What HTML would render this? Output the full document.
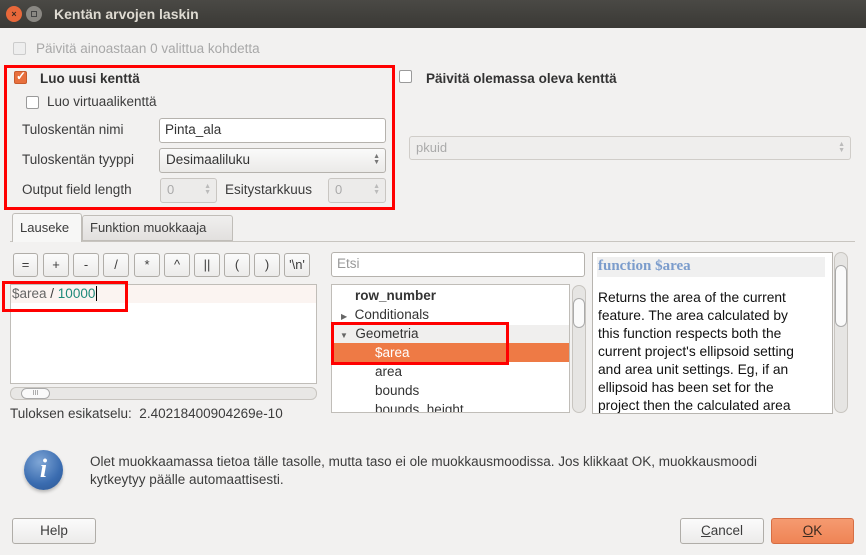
<!DOCTYPE html>
<html><head><meta charset="utf-8"><style>
*{box-sizing:border-box;margin:0;padding:0}
body{width:866px;height:555px;overflow:hidden;background:#f2f1f0;font-family:"Liberation Sans",sans-serif;font-size:13px;color:#3c3c3c;position:relative}
.a{position:absolute;white-space:nowrap}
.t{line-height:16px}
.cb{width:13px;height:13px;border:1px solid #9a9a9a;border-radius:2px;background:#fff}
.inp{background:#fff;border:1px solid #b5b2ad;border-radius:3px;padding-left:5px;line-height:22px}
.combo{background:linear-gradient(#fafafa,#ebeae8);border:1px solid #b5b2ad;border-radius:3px;padding-left:6px;line-height:22px}
.spin{background:#ecebea;border:1px solid #c9c6c2;border-radius:3px;color:#aaa;padding-left:6px;line-height:22px}
.btn{background:linear-gradient(#fbfbfb,#ecebea);border:1px solid #b0ada8;border-radius:3px;text-align:center}
.ob{top:253px;width:26px;height:24px;line-height:22px}
.red{border:3px solid #f00}
.arr{position:absolute;right:5px;font-size:7px;color:#777;line-height:6px}
</style></head><body>
<div class="a" style="left:0;top:0;width:866px;height:28px;background:linear-gradient(#4a4945,#3a3935)"></div>
<div class="a" style="left:6px;top:6px;width:16px;height:16px;border-radius:50%;background:#e8683a;color:#3a2a20;font-size:9px;text-align:center;line-height:16px;font-weight:bold">×</div>
<div class="a" style="left:26px;top:6px;width:16px;height:16px;border-radius:50%;background:#8a8883"><div style="margin:5px;width:6px;height:6px;border:1px solid #444"></div></div>
<div class="a" style="left:54px;top:6px;color:#dfdbd2;font-weight:bold;font-size:14px">Kentän arvojen laskin</div>

<div class="a cb" style="left:13px;top:42px;border-color:#ccc;background:#eee"></div>
<div class="a t" style="left:36px;top:41px;color:#a8a8a8;font-size:13.5px">Päivitä ainoastaan 0 valittua kohdetta</div>

<div class="a red" style="left:4px;top:65px;width:391px;height:145px"></div>
<div class="a cb" style="left:14px;top:71px;background:#e8703e;border-color:#c85a2c"><span style="position:absolute;left:1px;top:-3px;color:#fff;font-size:12px;font-weight:bold">✓</span></div>
<div class="a t" style="left:40px;top:71px;font-weight:bold;color:#333;font-size:13.5px">Luo uusi kenttä</div>
<div class="a cb" style="left:26px;top:96px"></div>
<div class="a t" style="left:47px;top:94px;font-size:13.5px">Luo virtuaalikenttä</div>
<div class="a t" style="left:22px;top:122px;font-size:13.5px">Tuloskentän nimi</div>
<div class="a inp" style="left:159px;top:118px;width:227px;height:25px;color:#333;font-size:13.5px">Pinta_ala</div>
<div class="a t" style="left:22px;top:152px;font-size:13.5px">Tuloskentän tyyppi</div>
<div class="a combo" style="left:159px;top:148px;width:227px;height:25px;color:#333;font-size:13.5px">Desimaaliluku<span class="arr" style="top:5px">▲<br>▼</span></div>
<div class="a t" style="left:22px;top:182px;font-size:13.5px">Output field length</div>
<div class="a spin" style="left:160px;top:178px;width:57px;height:25px">0<span class="arr" style="top:5px;color:#bbb">▲<br>▼</span></div>
<div class="a t" style="left:225px;top:182px;font-size:13.5px">Esitystarkkuus</div>
<div class="a spin" style="left:328px;top:178px;width:58px;height:25px">0<span class="arr" style="top:5px;color:#bbb">▲<br>▼</span></div>

<div class="a cb" style="left:399px;top:70px"></div>
<div class="a t" style="left:426px;top:71px;font-weight:bold;color:#333;font-size:13.5px">Päivitä olemassa oleva kenttä</div>
<div class="a combo" style="left:409px;top:136px;width:442px;height:24px;color:#aaa;background:#efeeed;border-color:#d0cdc9">pkuid<span class="arr" style="top:5px;color:#bbb">▲<br>▼</span></div>

<div class="a" style="left:10px;top:241px;width:845px;height:1px;background:#c8c5c0"></div>
<div class="a" style="left:12px;top:213px;width:70px;height:29px;background:#f7f7f6;border:1px solid #c0bdb8;border-bottom:none;border-radius:3px 3px 0 0;padding:6px 0 0 7px">Lauseke</div>
<div class="a" style="left:82px;top:215px;width:151px;height:26px;background:linear-gradient(#f0efee,#e2e0de);border:1px solid #c0bdb8;border-radius:3px 3px 0 0;padding:4px 0 0 7px">Funktion muokkaaja</div>

<div class="a btn ob" style="left:13px;width:25px">=</div>
<div class="a btn ob" style="left:43px">+</div>
<div class="a btn ob" style="left:73px">-</div>
<div class="a btn ob" style="left:103px">/</div>
<div class="a btn ob" style="left:134px">*</div>
<div class="a btn ob" style="left:164px">^</div>
<div class="a btn ob" style="left:194px">||</div>
<div class="a btn ob" style="left:224px">(</div>
<div class="a btn ob" style="left:254px">)</div>
<div class="a btn ob" style="left:284px">'\n'</div>

<div class="a" style="left:10px;top:284px;width:307px;height:100px;background:#fff;border:1px solid #c0bdb8"></div>
<div class="a" style="left:11px;top:285px;width:305px;height:18px;background:#fbf4f1"></div>
<div class="a t" style="left:12px;top:286px;font-size:13.5px"><span style="color:#666">$area</span> / <span style="color:#1e8a7a">10000</span><span style="border-left:1px solid #000;margin-left:1px"></span></div>
<div class="a red" style="left:2px;top:281px;width:126px;height:31px"></div>
<div class="a" style="left:10px;top:387px;width:307px;height:13px;border:1px solid #c8c5c0;border-radius:6px;background:#e8e7e5"></div>
<div class="a" style="left:21px;top:388px;width:29px;height:11px;border:1px solid #aaa;border-radius:6px;background:#fafafa;font-size:7px;text-align:center;line-height:9px;color:#888">III</div>
<div class="a t" style="left:10px;top:406px;font-size:13.5px">Tuloksen esikatselu:&nbsp; 2.40218400904269e-10</div>

<div class="a inp" style="left:331px;top:252px;width:254px;height:25px;color:#999;font-size:13.5px">Etsi</div>
<div class="a" style="left:331px;top:284px;width:239px;height:129px;background:#fff;border:1px solid #c0bdb8;overflow:hidden;font-size:13.5px">
  <div class="a t" style="left:23px;top:3px;font-weight:bold;color:#333">row_number</div>
  <div class="a t" style="left:9px;top:22px;color:#333"><span style="font-size:8px;color:#666">▶</span>&nbsp; Conditionals</div>
  <div class="a" style="left:0;top:40px;width:239px;height:18px;background:#f0efee"></div>
  <div class="a t" style="left:8px;top:41px;color:#333"><span style="font-size:8px;color:#666">▼</span>&nbsp; Geometria</div>
  <div class="a" style="left:2px;top:58px;width:236px;height:19px;background:#ee7a45"></div>
  <div class="a t" style="left:43px;top:60px;color:#fff">$area</div>
  <div class="a t" style="left:43px;top:79px;color:#333">area</div>
  <div class="a t" style="left:43px;top:98px;color:#333">bounds</div>
  <div class="a t" style="left:43px;top:117px;color:#333">bounds_height</div>
</div>
<div class="a" style="left:572px;top:285px;width:14px;height:128px;border:1px solid #c8c5c0;border-radius:7px;background:#e6e5e3"></div>
<div class="a" style="left:573px;top:298px;width:12px;height:30px;border:1px solid #aaa;border-radius:6px;background:#fafafa"></div>
<div class="a red" style="left:331px;top:322px;width:178px;height:43px"></div>

<div class="a" style="left:592px;top:252px;width:241px;height:162px;background:#fff;border:1px solid #b8b5b0;overflow:hidden">
  <div class="a" style="left:4px;top:4px;width:228px;height:20px;background:#f0f0f0"></div>
  <div class="a" style="left:5px;top:5px;font-family:'Liberation Serif',serif;font-weight:bold;font-size:15px;color:#7b9ccc">function $area</div>
  <div class="a" style="left:5px;top:36px;font-size:13.8px;line-height:18px;color:#111">Returns the area of the current<br>feature. The area calculated by<br>this function respects both the<br>current project's ellipsoid setting<br>and area unit settings. Eg, if an<br>ellipsoid has been set for the<br>project then the calculated area</div>
</div>
<div class="a" style="left:834px;top:252px;width:14px;height:161px;border:1px solid #c8c5c0;border-radius:7px;background:#e6e5e3"></div>
<div class="a" style="left:835px;top:265px;width:12px;height:62px;border:1px solid #aaa;border-radius:6px;background:#fafafa"></div>

<div class="a" style="left:24px;top:450px;width:39px;height:40px;border-radius:50%;background:radial-gradient(circle at 40% 30%,#7fa6d6,#3a6cb0 60%,#2c5590);box-shadow:0 2px 3px rgba(0,0,0,.25)"></div>
<div class="a" style="left:24px;top:452px;width:39px;text-align:center;font-family:'Liberation Serif',serif;font-style:italic;font-weight:bold;font-size:26px;color:#fff;line-height:34px">i</div>
<div class="a t" style="left:90px;top:454px;font-size:13.5px">Olet muokkaamassa tietoa tälle tasolle, mutta taso ei ole muokkausmoodissa. Jos klikkaat OK, muokkausmoodi</div>
<div class="a t" style="left:90px;top:472px;font-size:13.5px">kytkeytyy päälle automaattisesti.</div>

<div class="a btn" style="left:12px;top:518px;width:84px;height:26px;line-height:24px;font-size:13.5px">Help</div>
<div class="a btn" style="left:680px;top:518px;width:84px;height:26px;line-height:24px;font-size:13.5px"><u>C</u>ancel</div>
<div class="a btn" style="left:771px;top:518px;width:83px;height:26px;line-height:24px;font-size:13.5px;background:linear-gradient(#f59a70,#ef8455);border-color:#d66e44;color:#3a2a20"><u>O</u>K</div>
</body></html>
